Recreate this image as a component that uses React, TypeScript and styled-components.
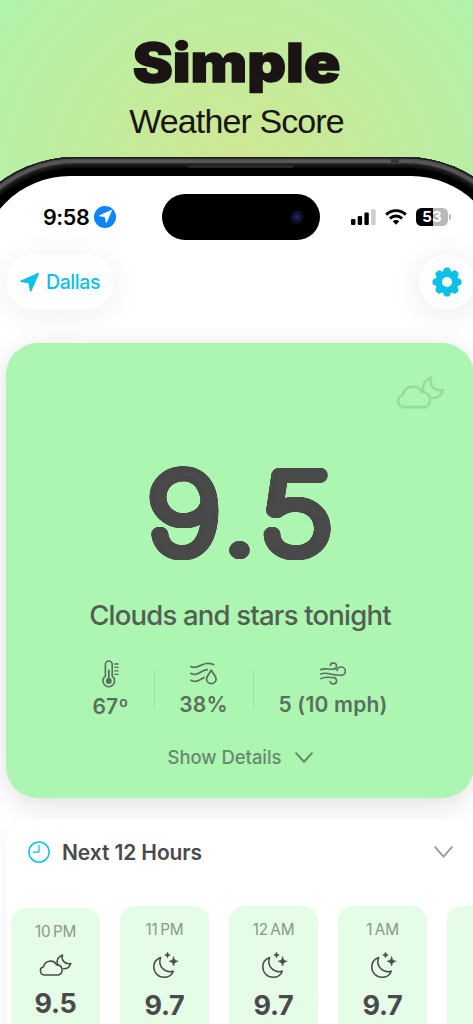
import {FC, ReactNode} from 'react';
import {createGlobalStyle, styled} from 'styled-components';

const ACCENT = '#0cc0e8';
const INK = '#4a4a4a';

interface HourForecast {
  label: string;
  score: string;
  kind: 'cloudMoon' | 'moonStars';
}

const hours: HourForecast[] = [
  {label: '10\u2009PM', score: '9.5', kind: 'cloudMoon'},
  {label: '11\u2009PM', score: '9.7', kind: 'moonStars'},
  {label: '12\u2009AM', score: '9.7', kind: 'moonStars'},
  {label: '1\u2009AM', score: '9.7', kind: 'moonStars'},
];

// Rings of shadows used to thicken the thin digits into rounded ones
const roundShadow = (radii: number[], color: string): string =>
  radii
    .flatMap(r =>
      Array.from({length: 48}, (_, i) => {
        const a = (i * Math.PI) / 24;
        const x = 0.9 * r * Math.cos(a);
        const y = r * Math.sin(a);
        return `${x.toFixed(2)}px ${y.toFixed(2)}px 0 ${color}`;
      })
    )
    .join(', ');

const ArrowIcon: FC<{size: number}> = ({size}) => (
  <svg width={size} height={size} viewBox="0 0 18 18">
    <path
      d="M17.2.8 1 7.9 8.8 9.2 10.1 17Z"
      fill="currentColor"
      stroke="currentColor"
      strokeWidth={1.5}
      strokeLinejoin="round"
    />
  </svg>
);

const GearIcon: FC = () => (
  <svg width={30} height={30} viewBox="-15 -15 30 30" fill="currentColor">
    <circle r={8.1} fill="none" stroke="currentColor" strokeWidth={6.2} />
    {[0, 45, 90, 135, 180, 225, 270, 315].map(angle => (
      <path
        key={angle}
        transform={`rotate(${angle})`}
        d="M-4.4-9.8-3.1-13Q-2.6-14.5-1.2-14.5H1.2Q2.6-14.5 3.1-13L4.4-9.8Z"
      />
    ))}
  </svg>
);

const CloudMoonIcon: FC<{width: number; stroke: number}> = ({width, stroke}) => (
  <svg
    width={width}
    height={(width * 33) / 49}
    viewBox="0 0 49 33"
    fill="none"
    stroke="currentColor"
    strokeWidth={stroke}
    strokeLinecap="round"
    strokeLinejoin="round"
  >
    <path d="M8 31.2H29A7.7 7.7 0 0 0 26.2 16.2 10.4 10.4 0 0 0 6.8 19 6.2 6.2 0 0 0 8 31.2Z" />
    <path d="M27.3 15.2C26 9 29 3.7 35 1.5 32.5 9 38.5 16 47.3 14 45.5 19 42 22 36.7 22" />
  </svg>
);

const MoonStarsIcon: FC = () => (
  <svg width={27} height={27} viewBox="0 0 27 27" fill="none">
    <path
      d="M7.6 5.5C3 7.2.8 11 .8 15A10.3 10.3 0 0 0 11 25.3C15.5 25.3 19 23 20.3 19.2 12 21.5 4.5 14.5 7.6 5.5Z"
      stroke="currentColor"
      strokeWidth={1.5}
      strokeLinejoin="round"
    />
    <path
      d="M14.5 0Q14.8 2.7 17.4 3 14.8 3.3 14.5 6 14.2 3.3 11.6 3 14.2 2.7 14.5 0Z"
      fill="currentColor"
      stroke="currentColor"
      strokeWidth={0.4}
    />
    <path
      d="M20.6 4.4Q21 8.8 25.2 9.2 21 9.6 20.6 14 20.2 9.6 16 9.2 20.2 8.8 20.6 4.4Z"
      fill="currentColor"
      stroke="currentColor"
      strokeWidth={0.6}
    />
  </svg>
);

const ThermometerIcon: FC = () => (
  <svg width={17} height={28} viewBox="0 0 17 28" fill="none" stroke="currentColor" strokeLinecap="round">
    <path d="M3.4 4.4a3.4 3.4 0 0 1 6.8 0V16.2a5.8 5.8 0 1 1-6.8 0Z" strokeWidth={1.6} />
    <path d="M6.8 10.5V20" strokeWidth={1.8} />
    <circle cx={6.8} cy={21} r={2.9} fill="currentColor" stroke="none" />
    <path d="M12.8 4H16M12.8 7.4H16M12.8 10.9H16M12.8 14.4H16" strokeWidth={1.4} />
  </svg>
);

const HumidityIcon: FC = () => (
  <svg
    width={27}
    height={23}
    viewBox="0 0 27 23"
    fill="none"
    stroke="currentColor"
    strokeWidth={1.7}
    strokeLinecap="round"
    strokeLinejoin="round"
  >
    <path d="M.9 4.6C8 8.6 13-2.3 23.5 2.6M.9 11.4C7.5 15 10.5 8.2 17.3 7.7M.9 18.3C6 21 9.5 18 14 15.4" />
    <path d="M21.3 8.2C19.2 11.8 16.5 14.3 16.5 17a4.8 4.6 0 0 0 9.6 0C26.1 14.3 23.4 11.8 21.3 8.2Z" />
  </svg>
);

const WindIcon: FC = () => (
  <svg
    width={26}
    height={23}
    viewBox="0 0 26 23"
    fill="none"
    stroke="currentColor"
    strokeWidth={1.6}
    strokeLinecap="round"
  >
    <path d="M.9 7.6C5 5.8 8.5 7.6 13 7.1A3.1 3.1 0 1 0 10.4 3.3" />
    <path d="M.9 12C7 9.4 11 13.6 20.6 13.3A4.2 4.2 0 1 0 17 8.5" />
    <path d="M.9 16.6C4.5 14.4 9 15.2 12.6 15.6A3.2 3.2 0 1 1 10.2 19.6" />
  </svg>
);

const ClockIcon: FC = () => (
  <svg width={22} height={22} viewBox="0 0 22 22" fill="none" stroke="currentColor" strokeLinecap="round">
    <circle cx={11} cy={11} r={10.1} strokeWidth={1.5} />
    <path d="M11 4.4V11.2H5.2" strokeWidth={1.2} strokeLinejoin="round" />
  </svg>
);

const ChevronIcon: FC<{width: number; height: number; stroke: number}> = ({width, height, stroke}) => (
  <svg width={width} height={height} viewBox={`0 0 ${width} ${height}`} fill="none">
    <path
      d={`M1.2 1.2 ${width / 2} ${height - 1.3} ${width - 1.2} 1.2`}
      stroke="currentColor"
      strokeWidth={stroke}
      strokeLinecap="round"
      strokeLinejoin="round"
    />
  </svg>
);

const SignalIcon: FC = () => (
  <svg width={25} height={16} viewBox="0 0 25 16">
    <rect x={0} y={10} width={4.4} height={6} rx={1.2} />
    <rect x={6.7} y={7} width={4.4} height={9} rx={1.2} />
    <rect x={13.4} y={3.6} width={4.4} height={12.4} rx={1.2} />
    <rect x={20.2} y={0.2} width={4.4} height={15.8} rx={1.2} fill="#ccc" />
  </svg>
);

const WifiIcon: FC = () => (
  <svg width={22} height={16} viewBox="0 0 22 16" fill="none" stroke="#000" strokeWidth={2.9}>
    <path d="M1.2 5.6A14 14 0 0 1 20.8 5.6" />
    <path d="M4.9 9.5A8.8 8.8 0 0 1 17.1 9.5" />
    <path d="M11 15.7 7.7 12.3A4.7 4.7 0 0 1 14.3 12.3Z" fill="#000" stroke="none" />
  </svg>
);

const Stat: FC<{icon: ReactNode; value: string; width: number; drop?: number}> = props => {
  const {icon, value, width, drop = 0} = props;
  return (
    <StatCell $width={width}>
      <StatIcon>{icon}</StatIcon>
      <StatValue $drop={drop}>{value}</StatValue>
    </StatCell>
  );
};

const App: FC = () => (
  <Page>
    <GlobalStyle />
    <Heading>Simple</Heading>
    <SubHeading>Weather Score</SubHeading>
    <Phone>
      <Speaker />
      <Antenna />
      <Screen>
        <StatusBar>
          <Time>9:58</Time>
          <LocationDot>
            <ArrowIcon size={13} />
          </LocationDot>
          <Island>
            <Camera />
          </Island>
          <StatusIcons>
            <SignalIcon />
            <WifiIcon />
            <BatteryWrapper>
              <Battery>53</Battery>
              <BatteryCap />
            </BatteryWrapper>
          </StatusIcons>
        </StatusBar>
        <Toolbar>
          <LocationPill>
            <ArrowIcon size={19} />
            Dallas
          </LocationPill>
          <SettingsButton>
            <GearIcon />
          </SettingsButton>
        </Toolbar>
        <Hero>
          <HeroIcon>
            <CloudMoonIcon width={49} stroke={2.7} />
          </HeroIcon>
          <HeroScore>9.5</HeroScore>
          <HeroMessage>Clouds and stars tonight</HeroMessage>
          <Stats>
            <Stat icon={<ThermometerIcon />} value="67º" width={86} drop={2} />
            <Divider />
            <Stat icon={<HumidityIcon />} value="38%" width={98} />
            <Divider />
            <Stat icon={<WindIcon />} value="5 (10 mph)" width={159} />
          </Stats>
          <Details>
            <span>Show Details</span>
            <ChevronIcon width={18} height={11} stroke={2} />
          </Details>
        </Hero>
        <Panel>
          <PanelHeader>
            <ClockIcon />
            <PanelTitle>Next 12 Hours</PanelTitle>
            <ChevronIcon width={19} height={12} stroke={2} />
          </PanelHeader>
          <HourList>
            {hours.map(({label, score, kind}) => (
              <HourCard key={label} $current={kind === 'cloudMoon'}>
                <HourLabel>{label}</HourLabel>
                <HourIcon $current={kind === 'cloudMoon'}>
                  {kind === 'cloudMoon' ? <CloudMoonIcon width={33} stroke={2.3} /> : <MoonStarsIcon />}
                </HourIcon>
                <HourScore $current={kind === 'cloudMoon'}>{score}</HourScore>
              </HourCard>
            ))}
            <HourCard $current={false} />
          </HourList>
        </Panel>
      </Screen>
    </Phone>
  </Page>
);

App.displayName = 'App';

export default App;

const GlobalStyle = createGlobalStyle`
  * {
    box-sizing: border-box;
  }
  body {
    margin: 0;
    overflow: hidden;
  }
  svg {
    display: block;
    flex-shrink: 0;
  }
`;

const Page = styled.div`
  display: flex;
  flex-direction: column;
  align-items: center;
  width: 473px;
  height: 1024px;
  overflow: hidden;
  font-family: Inter, 'Liberation Sans', sans-serif;
  color: ${INK};
  background: radial-gradient(circle at 240px 190px, #d0e790 0, #c6ea9a 110px, #bbeea2 210px, #aff3aa 310px);
`;

const Heading = styled.h1`
  flex-shrink: 0;
  margin: 34px 0 0;
  height: 62px;
  font-size: 53px;
  font-weight: 900;
  line-height: 58px;
  color: #1b1414;
  -webkit-text-stroke: 1.4px #1b1414;
  transform: scaleX(1.135);
`;

const SubHeading = styled.div`
  flex-shrink: 0;
  height: 61px;
  font-family: 'Liberation Sans', Arial, sans-serif;
  font-size: 34px;
  line-height: 50px;
  letter-spacing: -0.9px;
  color: #1b1414;
`;

const Phone = styled.div`
  position: relative;
  flex-shrink: 0;
  width: 581px;
  height: 1100px;
  margin-left: 8px;
  padding: 18.5px 29px 0;
  border-radius: 125px;
  background: #000;
  box-shadow:
    inset 0 0 0 1.5px #1c1a1b,
    inset 0 0 1px 3px #4a4a4a,
    inset 0 0 1px 6px #585858,
    inset 0 0 1px 7.5px #2c2c2c,
    inset 0 0 2px 10.5px #171717;
`;

// Details painted on the metal edge
const Speaker = styled.div`
  position: absolute;
  top: 8px;
  left: 237px;
  width: 107px;
  height: 3px;
  border-radius: 0 0 3px 3px;
  background: #262626;
`;
const Antenna = styled.div`
  position: absolute;
  top: 2px;
  left: 441px;
  width: 8px;
  height: 5px;
  background: #383838;
`;

const Screen = styled.div`
  width: 523px;
  height: 1080px;
  padding: 0 28px 0 27px;
  border-radius: 91px;
  background: #fff;
  overflow: hidden;
`;

const StatusBar = styled.div`
  display: flex;
  align-items: center;
  height: 78.5px;
  padding: 3.5px 20px 0 37px;
  color: #000;
`;

const Time = styled.div`
  width: 51px;
  font-size: 21.5px;
  font-weight: 600;
  line-height: 24px;
  letter-spacing: -0.4px;
`;

const LocationDot = styled.div`
  display: flex;
  align-items: center;
  justify-content: center;
  flex-shrink: 0;
  width: 22px;
  height: 22px;
  border-radius: 50%;
  color: #fff;
  background: #0a84ff;
`;

const Island = styled.div`
  display: flex;
  align-items: center;
  justify-content: flex-end;
  flex-shrink: 0;
  width: 158px;
  height: 46px;
  margin-left: 46px;
  padding-right: 16px;
  border-radius: 23px;
  background: #000;
`;

const Camera = styled.div`
  width: 14px;
  height: 14px;
  border-radius: 50%;
  background: radial-gradient(circle, #1c2a78 0, #10163f 3px, #0a0c20 6px, #050508 7px);
`;

const StatusIcons = styled.div`
  display: flex;
  align-items: center;
  gap: 9px;
  margin-left: 31px;
`;

const BatteryWrapper = styled.div`
  display: flex;
  align-items: center;
  gap: 1px;
`;

const Battery = styled.div`
  width: 32px;
  height: 18px;
  border-radius: 5.5px;
  font-size: 15px;
  font-weight: 700;
  line-height: 18px;
  text-align: center;
  color: #fff;
  background: linear-gradient(90deg, #000 53%, #b9b9b9 53%);
`;

const BatteryCap = styled.div`
  width: 2px;
  height: 6px;
  border-radius: 0 2px 2px 0;
  background: #b9b9b9;
`;

const Toolbar = styled.div`
  display: flex;
  justify-content: space-between;
  height: 89px;
  margin-right: -1px;
  color: ${ACCENT};
`;

const LocationPill = styled.div`
  display: flex;
  align-items: center;
  gap: 7px;
  width: 108px;
  height: 56px;
  padding-left: 14px;
  border-radius: 28px;
  font-size: 19.5px;
  font-weight: 500;
  letter-spacing: -0.4px;
  background: #fefefe;
  box-shadow: 0 4px 32px rgba(0, 0, 0, 0.07);
`;

const SettingsButton = styled.div`
  display: flex;
  align-items: center;
  justify-content: center;
  width: 56px;
  height: 56px;
  border-radius: 50%;
  background: #fefefe;
  box-shadow: 0 4px 32px rgba(0, 0, 0, 0.09);
`;

const Hero = styled.div`
  display: flex;
  flex-direction: column;
  align-items: center;
  width: 468px;
  height: 455px;
  border-radius: 32px;
  background: #acf6b1;
  box-shadow: 0 6px 26px rgba(0, 0, 0, 0.13);
`;

const HeroIcon = styled.div`
  align-self: flex-end;
  height: 67px;
  padding: 33px 29px 0 0;
  color: #99da9e;
`;

const HeroScore = styled.div`
  height: 185px;
  padding-top: 40px;
  font-size: 109px;
  font-weight: 100;
  line-height: 126px;
  letter-spacing: 3.5px;
  text-indent: 4.5px;
  text-shadow: ${roundShadow([3, 6.3], INK)};
  transform: scaleX(1.2);
`;

const HeroMessage = styled.div`
  height: 64px;
  font-size: 27.5px;
  font-weight: 500;
  line-height: 40px;
  letter-spacing: -0.8px;
  color: #535f54;
`;

const Stats = styled.div`
  display: flex;
  align-items: flex-start;
  height: 75px;
  color: #5a6f5c;
`;

const StatCell = styled.div<{$width: number}>`
  display: flex;
  flex-direction: column;
  align-items: center;
  width: ${p => p.$width}px;
`;

const StatIcon = styled.div`
  display: flex;
  align-items: center;
  height: 29px;
`;

const StatValue = styled.div<{$drop: number}>`
  margin-top: ${p => 4 + p.$drop}px;
  font-size: 21px;
  font-weight: 600;
  line-height: 26px;
  letter-spacing: 0.2px;
  white-space: nowrap;
`;

const Divider = styled.div`
  width: 1px;
  height: 38px;
  margin-top: 11px;
  background: #9fdfa4;
`;

const Details = styled.div`
  display: flex;
  align-items: center;
  gap: 13px;
  height: 46px;
  font-size: 18.5px;
  font-weight: 500;
  letter-spacing: -0.05px;
  color: #6a8a6d;
`;

const Panel = styled.div`
  width: 468px;
  height: 300px;
  margin-top: 21px;
  border-radius: 22px;
  background: #fff;
  box-shadow: 0 4px 20px rgba(0, 0, 0, 0.05);
`;

const PanelHeader = styled.div`
  display: flex;
  align-items: center;
  height: 87px;
  padding: 0 21px 21px 22px;
  color: ${ACCENT};
  & > :last-child {
    color: #9c9c9c;
  }
`;

const PanelTitle = styled.div`
  flex-grow: 1;
  padding-left: 12px;
  font-size: 21px;
  font-weight: 600;
  letter-spacing: -0.1px;
  color: ${INK};
`;

const HourList = styled.div`
  display: flex;
  gap: 20px;
  padding-left: 5px;
`;

const HourCard = styled.div<{$current: boolean}>`
  display: flex;
  flex-direction: column;
  align-items: center;
  flex-shrink: 0;
  width: 89px;
  height: 180px;
  margin-top: ${p => (p.$current ? 2 : 0)}px;
  padding-top: 14px;
  border-radius: 15px;
  background: #e5fce6;
`;

const HourLabel = styled.div`
  height: 20px;
  font-size: 15.3px;
  line-height: 20px;
  letter-spacing: -0.2px;
  color: #8b978c;
`;

const HourIcon = styled.div<{$current: boolean}>`
  display: flex;
  align-items: center;
  height: ${p => (p.$current ? 46 : 50)}px;
  padding-left: ${p => (p.$current ? 0 : 4)}px;
`;

const HourScore = styled.div<{$current: boolean}>`
  font-size: 27px;
  font-weight: 700;
  line-height: 32px;
  letter-spacing: -0.3px;
`;
